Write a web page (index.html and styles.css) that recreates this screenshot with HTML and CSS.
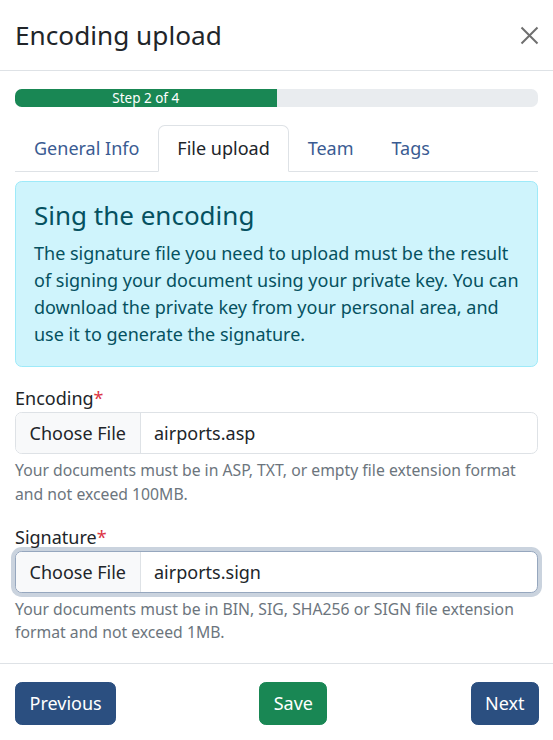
FILE: index.html
```html
<!DOCTYPE html>
<html lang="en">
<head>
<meta charset="utf-8">
<title>Encoding upload</title>
<link rel="stylesheet" href="styles.css">
</head>
<body>
<div class="modal">
  <div class="modal-header">
    <h5 class="modal-title">Encoding upload</h5>
    <button class="btn-close" type="button" aria-label="Close">
      <svg width="19" height="19" viewBox="0 0 19 19"><path d="M1.5 1.5 L17.5 17.5 M17.5 1.5 L1.5 17.5" stroke="#6f6f6f" stroke-width="2" fill="none"/></svg>
    </button>
  </div>
  <div class="modal-body">
    <div class="progress">
      <div class="progress-bar" style="width: 50%">Step 2 of 4</div>
    </div>
    <ul class="nav-tabs">
      <li><a class="nav-link">General Info</a></li>
      <li><a class="nav-link active">File upload</a></li>
      <li><a class="nav-link">Team</a></li>
      <li><a class="nav-link">Tags</a></li>
    </ul>
    <div class="tab-pane">
      <div class="alert">
        <h4 class="alert-heading">Sing the encoding</h4>
        <p>The signature file you need to upload must be the result of signing your document using your private key. You can download the private key from your personal area, and use it to generate the signature.</p>
      </div>
      <div class="field">
        <label class="form-label">Encoding<span class="req">*</span></label>
        <div class="file-input">
          <span class="file-btn">Choose File</span>
          <span class="file-name">airports.asp</span>
        </div>
        <div class="form-text">Your documents must be in ASP, TXT, or empty file extension format and not exceed 100MB.</div>
      </div>
      <div class="field last">
        <label class="form-label">Signature<span class="req">*</span></label>
        <div class="file-input focus">
          <span class="file-btn">Choose File</span>
          <span class="file-name">airports.sign</span>
        </div>
        <div class="form-text">Your documents must be in BIN, SIG, SHA256 or SIGN file extension format and not exceed 1MB.</div>
      </div>
    </div>
  </div>
  <div class="modal-footer">
    <button class="btn btn-primary" type="button">Previous</button>
    <button class="btn btn-success" type="button">Save</button>
    <button class="btn btn-primary" type="button">Next</button>
  </div>
</div>
</body>
</html>
```
FILE: styles.css
```css
* { box-sizing: border-box; }
html, body { margin: 0; padding: 0; }
body {
  font-family: "Noto Sans", "Open Sans", sans-serif;
  font-size: 18px;
  line-height: 1.5;
  color: #212529;
  background: #fff;
  width: 553px;
}
.modal { display: flex; flex-direction: column; }
.modal-header {
  display: flex;
  align-items: center;
  justify-content: space-between;
  padding: 0 14px 0 15px;
  border-bottom: 1px solid #dee2e6;
  height: 71px;
}
.modal-title {
  margin: 0;
  font-size: 26.2px;
  font-weight: 400;
  line-height: 35px;
}
.btn-close {
  border: 0;
  background: transparent;
  padding: 0;
  width: 19px;
  height: 19px;
  display: flex;
}
.modal-body { padding: 18px 15px 18px 15px; }
.progress {
  height: 18px;
  background: #e9ecef;
  border-radius: 6.75px;
  overflow: hidden;
  display: flex;
  margin-bottom: 18px;
}
.progress-bar {
  background: #198754;
  color: #fff;
  font-size: 13.5px;
  line-height: 18px;
  text-align: center;
  white-space: nowrap;
}
.nav-tabs {
  list-style: none;
  margin: 0;
  padding: 0;
  display: flex;
  border-bottom: 1px solid #dee2e6;
}
.nav-tabs li { margin-bottom: -1px; }
.nav-link {
  display: block;
  padding: 9px 18px;
  border: 1px solid transparent;
  border-top-left-radius: 6.75px;
  border-top-right-radius: 6.75px;
  color: #3a5b92;
  line-height: 27px;
}
.nav-link.active {
  color: #212529;
  background: #fff;
  border-color: #dee2e6 #dee2e6 #fff;
}
.tab-pane { padding-top: 9px; }
.alert {
  background: #cff4fc;
  border: 1px solid #9eeaf9;
  border-radius: 6.75px;
  color: #055160;
  padding: 17px 18px 18px;
  margin-bottom: 18px;
}
.alert-heading {
  margin: 0 0 9px;
  font-size: 26px;
  font-weight: 400;
  line-height: 32.4px;
}
.alert p { margin: 0; line-height: 27px; }
.field { margin-bottom: 18px; }
.field.last { margin-bottom: 0; }
.form-label { display: block; line-height: 27px; }
.req { color: #dc3545; }
.file-input {
  display: flex;
  align-items: stretch;
  height: 42px;
  border: 1px solid #dee2e6;
  border-radius: 6.75px;
  overflow: hidden;
  background: #fff;
}
.file-input.focus {
  border-color: #96a7be;
  box-shadow: 0 0 0 4px rgba(44, 79, 124, 0.25);
}
.file-btn {
  background: #f8f9fa;
  border-right: 1px solid #dee2e6;
  padding: 0 13.5px;
  display: flex;
  align-items: center;
}
.file-name {
  padding: 0 13.5px;
  display: flex;
  align-items: center;
}
.form-text {
  margin-top: 4.5px;
  font-size: 15.75px;
  line-height: 23.6px;
  color: #6c757d;
}
.modal-footer {
  border-top: 1px solid #dee2e6;
  display: flex;
  justify-content: space-between;
  padding: 18px 14px 14px 15px;
}
.btn {
  font-family: inherit;
  font-size: 18px;
  line-height: 27px;
  padding: 7px 13.5px;
  border: 1px solid transparent;
  border-radius: 6.75px;
  color: #fff;
  height: 43px;
}
.btn-primary { background: #2b4f80; border-color: #2b4f80; }
.btn-success { background: #198754; border-color: #198754; }
```
